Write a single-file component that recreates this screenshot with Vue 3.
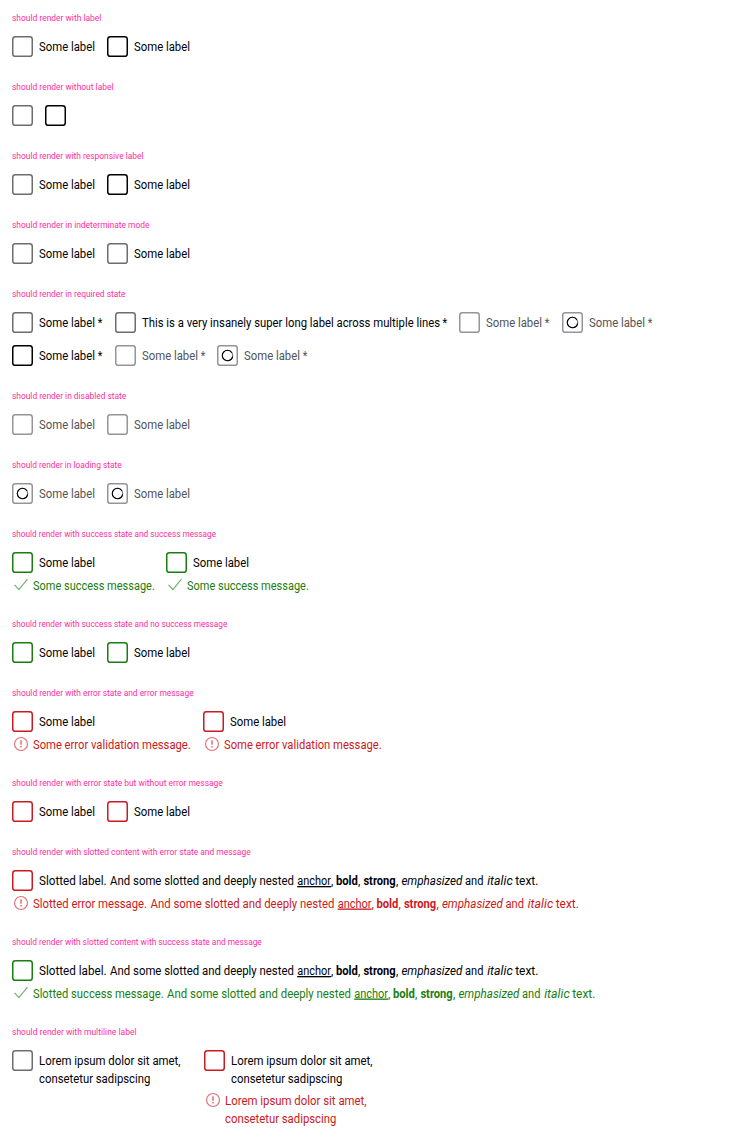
<script setup>
import { h } from 'vue'

// Builds one run of text: content, left offset, drawn width, style
const run = (text, x, w, style = '', line = 0) => ({ text, x, w, style, line })

const TextLine = ({ runs, width, lines = 1, baseline = 14 }) =>
  h('svg', { width, height: lines * 18, class: 'text-line' }, runs.map(r =>
    h('text', {
      x: r.x, y: baseline + r.line * 18, textLength: r.w,
      lengthAdjust: 'spacingAndGlyphs', class: r.style
    }, r.text)))
TextLine.props = ['runs', 'width', 'lines', 'baseline']

const plain = (text, width, inked = width - 1) => ({ width, runs: [run(text, 0, inked)] })
const label = () => plain('Some label', 56.2, 56)
const required = () => ({ width: 63.7, runs: [run('Some label', 0, 56), run('*', 58.8, 4.6)] })
const check = (tone = '', text = label(), extra = {}) => ({ tone, label: text, ...extra })

const rich = (lead, leadWidth, at) => {
  const second = 'And some slotted and deeply nested'
  return {
    width: at + 242,
    runs: [
      run(lead, 0, leadWidth),
      run(second, leadWidth + 3.5, at - leadWidth - 6.8),
      run('anchor', at, 33.8, 'link'), run(',', at + 33.8, 2.3),
      run('bold', at + 38.7, 22, 'bold'), run(',', at + 60.8, 2.3),
      run('strong', at + 66.2, 32.3, 'bold'), run(',', at + 98.8, 2.3),
      run('emphasized', at + 104.2, 61, 'italic'), run('and', at + 167.8, 18.4),
      run('italic', at + 190, 25.5, 'italic'), run('text.', at + 218, 23.2)
    ]
  }
}
const lorem = () => ({
  width: 142, lines: 2,
  runs: [run('Lorem ipsum dolor sit amet,', 0, 141.6), run('consetetur sadipscing', 0, 111.4, '', 1)]
})

const success = () => ({ message: plain('Some success message.', 121.4, 121.8) })
const error = () => ({ message: plain('Some error validation message.', 157.5, 157.7) })
const slotted = rich('Slotted label.', 67.6, 258.2)

const groups = [
  { title: 'should render with label', w: 89.3, rows: [[check(), check('strong')]] },
  { title: 'should render without label', w: 101.5, rows: [[check('', null), check('strong', null)]] },
  { title: 'should render with responsive label', w: 131.5, rows: [[check(), check('strong')]] },
  { title: 'should render in indeterminate mode', w: 137.5, rows: [[check(), check()]] },
  {
    title: 'should render in required state', w: 113.5, rows: [
      [
        check('', required()),
        check('', { width: 305.5, runs: [run('This is a very insanely super long label across multiple lines', 0, 298), run('*', 300.5, 4.6)] }),
        check('disabled', required()),
        check('disabled', required(), { loading: true })
      ],
      [check('strong', required()), check('disabled', required()), check('disabled', required(), { loading: true })]
    ]
  },
  { title: 'should render in disabled state', w: 114.3, rows: [[check('disabled'), check('disabled')]] },
  { title: 'should render in loading state', w: 109.6, rows: [[check('disabled', label(), { loading: true }), check('disabled', label(), { loading: true })]] },
  { title: 'should render with success state and success message', w: 204, rows: [[check('success', label(), success()), check('success', label(), success())]] },
  { title: 'should render with success state and no success message', w: 215.3, rows: [[check('success'), check('success')]] },
  { title: 'should render with error state and error message', w: 181.6, rows: [[check('error', label(), error()), check('error', label(), error())]] },
  { title: 'should render with error state but without error message', w: 210.8, rows: [[check('error'), check('error')]] },
  {
    title: 'should render with slotted content with error state and message', w: 238.6,
    rows: [[check('error', slotted, { message: rich('Slotted error message.', 114, 304.7) })]]
  },
  {
    title: 'should render with slotted content with success state and message', w: 249.8,
    rows: [[check('success', slotted, { message: rich('Slotted success message.', 130.6, 321.2) })]]
  },
  {
    title: 'should render with multiline label', w: 124.5,
    rows: [[check('', lorem(), { wide: true }), check('error', lorem(), { wide: true, message: lorem() })]]
  }
]
</script>

<template>
  <main class="page">
    <section v-for="group in groups" :key="group.title" class="group">
      <svg class="title" :width="group.w + 2" height="12">
        <text x="0" y="9" :textLength="group.w" lengthAdjust="spacingAndGlyphs">{{ group.title }}</text>
      </svg>
      <div v-for="(row, i) in group.rows" :key="i" class="row">
        <div v-for="(item, j) in row" :key="j" class="item" :class="[item.tone, { wide: item.wide }]">
          <div class="control">
            <svg class="box" width="21" height="21" viewBox="0 0 21 21">
              <rect class="frame" x=".75" y=".75" width="19.5" height="19.5" rx="2.6" />
              <template v-if="item.loading">
                <circle class="track" cx="10.5" cy="10.5" r="5.2" />
                <circle class="spinner" cx="10.5" cy="10.5" r="5.2" />
              </template>
            </svg>
            <div v-if="item.label" class="label"><TextLine v-bind="item.label" /></div>
          </div>
          <div v-if="item.message" class="message">
            <svg class="state-icon" width="18" height="18" viewBox="0 0 24 24">
              <path v-if="item.tone === 'success'" d="M3.4 11.9 9.2 18.2 20.6 4.2" />
              <template v-else>
                <circle cx="12" cy="12" r="8.6" />
                <path class="mark" d="M12 7v6M12 14.8v2" />
              </template>
            </svg>
            <TextLine v-bind="item.message" :baseline="13.5" />
          </div>
        </div>
      </div>
    </section>
  </main>
</template>

<style>
body { background: #fff; }
</style>

<style scoped>
.page { padding: 12px; display: flex; flex-direction: column; gap: 24px; font: 13.2px/18px Roboto, "Liberation Sans", sans-serif; color: #010205; }
.group { display: flex; flex-direction: column; gap: 12px; }
svg { display: block; flex: none; overflow: visible; }
.title { font-size: 9.4px; fill: #ff2b9e; }
.row { display: flex; align-items: flex-start; gap: 12px; }
.item { --frame: #6b6d70; }
.item.wide { width: 180px; }
.strong { --frame: #010205; }
.disabled { --frame: #949598; color: #535457; }
.success { --frame: #197e10; }
.error { --frame: #cc1922; }
.control { display: flex; gap: 6px; }
.label { padding: 1px 0; min-height: 19px; }
.frame { fill: #fff; stroke: var(--frame); stroke-width: 1.5; }
.track, .spinner { fill: none; stroke-width: 1.1; }
.track { stroke: #77787c; }
.spinner { stroke: #010205; stroke-dasharray: 28 4.7; stroke-dashoffset: -1; }
.message { display: flex; gap: 3px; margin-top: 3px; color: var(--frame); }
.state-icon { fill: none; stroke: currentColor; stroke-width: 1.5; opacity: .62; }
.state-icon .mark { stroke-width: 2; }
:deep(.text-line) { display: block; flex: none; overflow: visible; fill: currentColor; }
:deep(.link) { text-decoration: underline; }
:deep(.bold) { font-weight: 700; }
:deep(.italic) { font-style: italic; }
</style>
